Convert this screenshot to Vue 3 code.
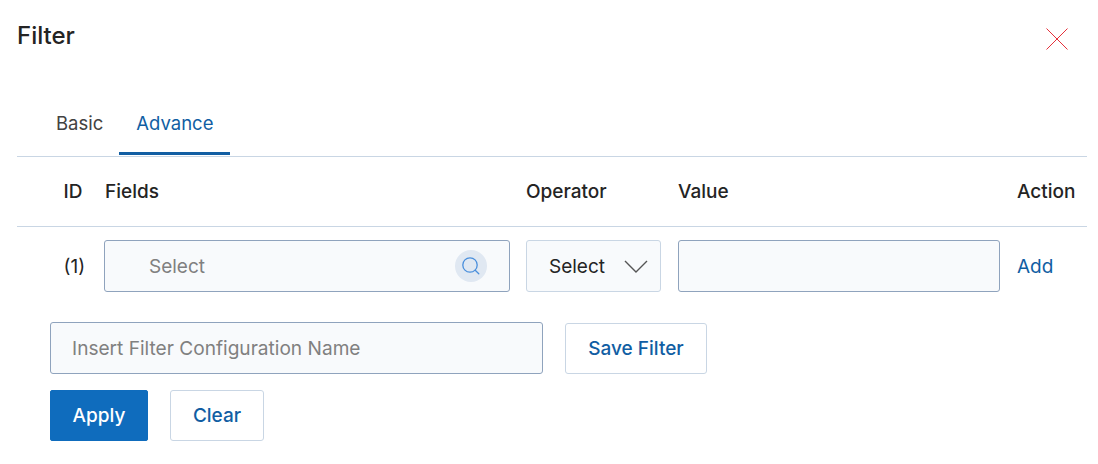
<script setup>
const tabs = [
  { label: 'Basic', active: false },
  { label: 'Advance', active: true }
]
</script>

<template>
  <div class="panel">
    <header class="head">
      <h2 class="title">Filter</h2>
      <button class="close" aria-label="Close">
        <svg width="24" height="24" viewBox="0 0 24 24" fill="none" stroke="#e5303a" stroke-width="1">
          <path d="M1.5 1.5 22.5 22.5M22.5 1.5 1.5 22.5" />
        </svg>
      </button>
    </header>

    <nav class="tabs">
      <a v-for="t in tabs" :key="t.label" class="tab" :class="{ active: t.active }">{{ t.label }}</a>
    </nav>

    <div class="grid hrow">
      <div class="id">ID</div>
      <div>Fields</div>
      <div>Operator</div>
      <div>Value</div>
      <div>Action</div>
    </div>

    <div class="grid brow">
      <div class="id num">(1)</div>
      <div class="field fields">
        <span class="ph">Select</span>
        <span class="search">
          <svg width="22" height="22" viewBox="0 0 22 22" fill="none" stroke="#4a8fdc" stroke-width="1.3">
            <circle cx="10" cy="10" r="7.2" />
            <path d="M15.2 15.2 18.8 18.8" stroke-linecap="round" />
          </svg>
        </span>
      </div>
      <div class="field oper">
        <span>Select</span>
        <svg width="24" height="14" viewBox="0 0 24 14" fill="none" stroke="#555" stroke-width="1.4">
          <path d="M1 2 12 13 23 2" />
        </svg>
      </div>
      <div class="field value"></div>
      <a class="add">Add</a>
    </div>

    <div class="save-row">
      <div class="field name"><span class="ph">Insert Filter Configuration Name</span></div>
      <button class="btn save">Save Filter</button>
    </div>

    <div class="actions">
      <button class="btn primary">Apply</button>
      <button class="btn clear">Clear</button>
    </div>
  </div>
</template>

<style scoped>
.panel {
  width: 1098px;
  height: 464px;
  box-sizing: border-box;
  padding: 22px 11px 0 17px;
  font-family: Inter, "Liberation Sans", sans-serif;
  font-size: 19px;
  color: #242424;
  background: #fff;
  overflow: hidden;
}
.head {
  display: flex;
  justify-content: space-between;
  align-items: flex-start;
  height: 73px;
}
.title {
  margin: 0;
  font-size: 24px;
  line-height: 28px;
  font-weight: 450;
  color: #242424;
}
.close {
  border: 0;
  background: none;
  padding: 0;
  margin: 5px 18px 0 0;
  width: 24px;
  height: 24px;
  display: block;
}
.close svg { display: block; }
.tabs {
  display: flex;
  height: 61px;
  border-bottom: 1px solid #c9d6e4;
  padding-left: 22px;
  font-size: 18.5px;
}
.tab {
  display: block;
  box-sizing: border-box;
  padding: 18px 16px 0 17px;
  height: 61px;
  line-height: 20px;
  color: #424242;
}
.tab.active {
  padding-right: 17px;
  color: #115ea3;
  border-bottom: 3px solid #115ea3;
  height: 60px;
}
.grid {
  display: grid;
  grid-template-columns: 87px 422px 152px 339px 1fr;
  align-items: center;
}
.hrow {
  height: 69px;
  border-bottom: 1px solid #c9d6e4;
  font-weight: 450;
}
.id { padding-left: 46.5px; }
.hrow > div:nth-child(2) { padding-left: 1px; }
.brow {
  height: 52px;
  margin-top: 13px;
}
.field {
  box-sizing: border-box;
  background: #f8fafc;
  border: 1px solid #8fa3bd;
  border-radius: 3px;
  display: flex;
  align-items: center;
  height: 52px;
}
.fields {
  width: 406px;
  padding: 0 22px 0 44px;
  justify-content: space-between;
}
.ph { color: #808080; }
.search {
  width: 32px;
  height: 32px;
  border-radius: 50%;
  background: #e0e8f2;
  display: flex;
  align-items: center;
  justify-content: center;
}
.oper {
  width: 135px;
  padding: 0 12px 0 22px;
  justify-content: space-between;
  border-color: #c9d6e4;
}
.value { width: 322px; }
.add { color: #115ea3; }
.save-row {
  display: flex;
  align-items: center;
  gap: 22px;
  margin: 30px 0 0 33px;
}
.name {
  width: 493px;
  padding-left: 21px;
  font-size: 19.1px;
}
.btn {
  font: inherit;
  font-weight: 500;
  height: 51px;
  box-sizing: border-box;
  background: #fff;
  border: 1px solid #c9d6e4;
  border-radius: 3px;
  color: #115ea3;
  padding: 0;
}
.save { width: 142px; }
.actions {
  display: flex;
  gap: 22px;
  margin: 16px 0 0 33px;
}
.primary {
  width: 98px;
  background: #0f6cbd;
  border-color: #0f6cbd;
  border-radius: 2px;
  color: #fff;
}
.clear { width: 94px; }
</style>
